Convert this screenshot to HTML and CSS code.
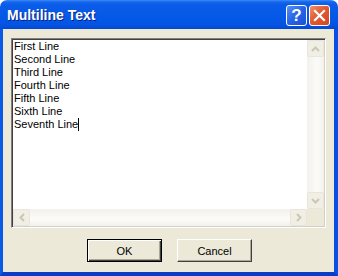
FILE: index.html
```html
<!DOCTYPE html>
<html lang="en">
<head>
    <meta charset="UTF-8">
    <title>Multiline Text</title>
    <link rel="stylesheet" href="styles.css">
</head>
<body>
    <div class="window">
        <div class="titlebar">
            <div class="title">Multiline Text</div>
            <div class="title-buttons">
                <div class="tb-btn help">?</div>
                <div class="tb-btn close">
                    <svg width="13" height="13" viewBox="0 0 13 13">
                        <path d="M2 2 L11 11 M11 2 L2 11" stroke="#fff" stroke-width="2.2" stroke-linecap="square"/>
                    </svg>
                </div>
            </div>
        </div>
        <div class="frame">
            <div class="client">
                <div class="editbox">
                    <div class="text">First Line<br>Second Line<br>Third Line<br>Fourth Line<br>Fifth Line<br>Sixth Line<br>Seventh Line<span class="caret"></span></div>
                    <div class="vscroll">
                        <div class="sb-btn">
                            <svg width="9" height="6" viewBox="0 0 9 6"><path d="M1 5 L4.5 1.5 L8 5" fill="none" stroke="#c9c7ba" stroke-width="2"/></svg>
                        </div>
                        <div class="sb-track"></div>
                        <div class="sb-btn">
                            <svg width="9" height="6" viewBox="0 0 9 6"><path d="M1 1 L4.5 4.5 L8 1" fill="none" stroke="#c9c7ba" stroke-width="2"/></svg>
                        </div>
                    </div>
                    <div class="hscroll">
                        <div class="sb-btn">
                            <svg width="6" height="9" viewBox="0 0 6 9"><path d="M5 1 L1.5 4.5 L5 8" fill="none" stroke="#c9c7ba" stroke-width="2"/></svg>
                        </div>
                        <div class="sb-track"></div>
                        <div class="sb-btn">
                            <svg width="6" height="9" viewBox="0 0 6 9"><path d="M1 1 L4.5 4.5 L1 8" fill="none" stroke="#c9c7ba" stroke-width="2"/></svg>
                        </div>
                    </div>
                    <div class="corner"></div>
                </div>
                <div class="actions">
                    <button type="button" class="btn default">OK</button>
                    <button type="button" class="btn">Cancel</button>
                </div>
            </div>
        </div>
    </div>
</body>
</html>
```

FILE: styles.css
```css
body {
    margin: 0;
    background-color: #ffffff;
    font-family: "Liberation Sans", Arial, sans-serif;
}
.window {
    width: 338px;
    height: 276px;
    display: flex;
    flex-direction: column;
}
.titlebar {
    height: 29px;
    box-sizing: border-box;
    display: flex;
    align-items: center;
    justify-content: space-between;
    padding: 0 8px 0 7px;
    border-radius: 7px 7px 0 0;
    background: linear-gradient(#3d8bf7 0, #1566ec 2px, #0a5ce8 5px, #0558e6 60%, #0454e2 85%, #0348d4 100%);
}
.title {
    color: #fff;
    font-weight: bold;
    font-size: 14px;
    padding-top: 1px;
    text-shadow: 1px 1px 0 #0a1e80;
}
.title-buttons {
    display: flex;
    gap: 2px;
    padding-top: 2px;
}
.tb-btn {
    width: 21px;
    height: 21px;
    box-sizing: border-box;
    border: 1px solid #fff;
    border-radius: 3px;
    display: flex;
    align-items: center;
    justify-content: center;
}
.help {
    background: linear-gradient(135deg, #5a8ff5 0%, #2663e6 50%, #1a52d8 100%);
    color: #fff;
    font-weight: bold;
    font-size: 17px;
}
.close {
    background: linear-gradient(135deg, #f0906a 0%, #e15a32 45%, #d2461f 100%);
}
.frame {
    flex: 1;
    display: flex;
    border-left: 3px solid #0a5ae8;
    border-right: 4px solid #0750e0;
    border-bottom: 4px solid #0a3cc8;
    box-shadow: inset 0 -1px 0 #0838c0;
}
.client {
    flex: 1;
    background-color: #ece9d8;
    display: flex;
    flex-direction: column;
    padding: 9px 8px 10px 8px;
}
.editbox {
    height: 190px;
    box-sizing: border-box;
    border-top: 1px solid #808080;
    border-left: 1px solid #808080;
    border-right: 1px solid #ffffff;
    border-bottom: 1px solid #ffffff;
    box-shadow: inset 1px 1px 0 #404040, inset -1px -1px 0 #d4d0c8;
    padding: 1px;
    background-color: #fff;
    display: grid;
    grid-template-columns: 1fr 17px;
    grid-template-rows: 1fr 17px;
}
.text {
    font-size: 11px;
    line-height: 13px;
    color: #000;
    padding: 0 1px;
}
.caret {
    display: inline-block;
    width: 1px;
    height: 13px;
    background-color: #000;
    vertical-align: top;
}
.vscroll {
    display: flex;
    flex-direction: column;
    background: linear-gradient(90deg, #f3f1ec, #fbfbf8 60%, #f3f1ec);
}
.hscroll {
    display: flex;
    background: linear-gradient(#f3f1ec, #fbfbf8 60%, #f3f1ec);
}
.sb-track {
    flex: 1;
}
.sb-btn {
    width: 17px;
    height: 17px;
    box-sizing: border-box;
    border: 1px solid #e8e6dc;
    border-radius: 2px;
    background-color: #f1efe4;
    display: flex;
    align-items: center;
    justify-content: center;
}
.corner {
    background-color: #ece9d8;
}
.actions {
    margin-top: 11px;
    display: flex;
    justify-content: center;
    gap: 15px;
    padding-left: 2px;
}
.btn {
    width: 75px;
    height: 23px;
    box-sizing: border-box;
    font-family: "Liberation Sans", Arial, sans-serif;
    font-size: 11px;
    color: #000;
    background-color: #ece9d8;
    border: 1px solid #404040;
    border-top-color: #ffffff;
    border-left-color: #ffffff;
    box-shadow: inset -1px -1px 0 #aca899;
    padding: 0;
}
.btn.default {
    border: 1px solid #000;
    box-shadow: inset 1px 1px 0 #fff, inset -1px -1px 0 #404040, inset -2px -2px 0 #aca899;
}
```
